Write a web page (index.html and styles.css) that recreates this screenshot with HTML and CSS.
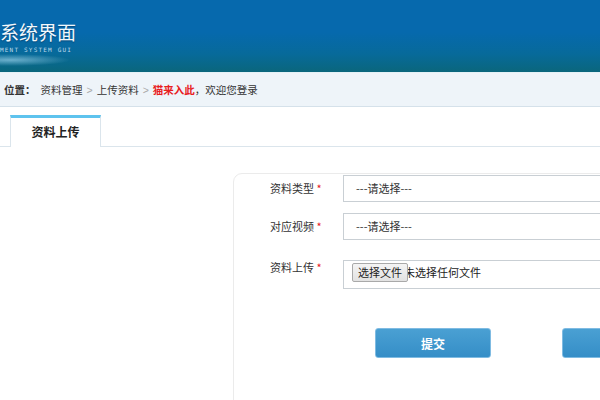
FILE: index.html
```html
<!DOCTYPE html>
<html lang="zh">
<head>
<meta charset="utf-8">
<link rel="stylesheet" href="styles.css">
</head>
<body>
<header class="header">
  <div class="logo">
    <div class="logo-title">系统界面</div>
    <div class="logo-sub">MENT SYSTEM GUI</div>
  </div>
</header>
<nav class="crumbs">
  <span class="crumbs-label">位置：</span>
  <span class="crumb">资料管理</span>
  <span class="sep">&gt;</span>
  <span class="crumb">上传资料</span>
  <span class="sep">&gt;</span>
  <span class="crumb-red">猫来入此</span><span class="crumb">，欢迎您登录</span>
</nav>
<div class="tabbar">
  <div class="tab">资料上传</div>
</div>
<main class="content">
  <section class="card">
    <div class="form">
      <div class="row">
        <div class="label">资料类型 <span class="req">*</span></div>
        <div class="field">---请选择---</div>
      </div>
      <div class="row row-gap-s">
        <div class="label">对应视频 <span class="req">*</span></div>
        <div class="field">---请选择---</div>
      </div>
      <div class="row row-gap-l">
        <div class="label label-top">资料上传 <span class="req">*</span></div>
        <div class="field field-file"><span class="file-btn">选择文件</span><span class="file-text">未选择任何文件</span></div>
      </div>
      <div class="actions">
        <button class="btn" type="button">提交</button>
        <button class="btn" type="button" aria-label="重置"></button>
      </div>
    </div>
  </section>
</main>
</body>
</html>
```
FILE: styles.css
```css
* { box-sizing: border-box; }
html, body { margin: 0; padding: 0; }
body {
  width: 600px;
  height: 400px;
  overflow: hidden;
  background: #fff;
  font-family: "Liberation Sans", "Noto Sans CJK SC", sans-serif;
  font-size: 12px;
  color: #333;
}
.header {
  height: 73px;
  border-bottom: 1px solid #e4f1f6;
  background:
    radial-gradient(ellipse 60px 6px at 10px 60px, rgba(190,235,255,0.55), rgba(190,235,255,0) 100%),
    linear-gradient(to bottom, #0669ad 0%, #0669ad 45%, #076a9a 75%, #0a667c 100%);
}
.logo { padding-top: 20px; width: 120px; }
.logo-title {
  color: #f2f8fc;
  font-family: "Noto Sans CJK SC", sans-serif;
  font-size: 19px;
  line-height: 24px;
  text-shadow: 0 1px 1px rgba(0,40,80,0.5);
}
.logo-sub {
  margin-top: 2px;
  color: #bcd8ea;
  font-family: "DejaVu Sans Mono", monospace;
  font-size: 6px;
  line-height: 8px;
  letter-spacing: 1.2px;
}
.crumbs {
  height: 34px;
  background: #eef4f9;
  border-bottom: 1px solid #d5e1ea;
  display: flex;
  align-items: center;
  padding-left: 4px;
  font-family: "Noto Sans CJK SC", sans-serif;
  font-size: 10.5px;
  color: #333;
}
.crumbs-label { font-weight: 700; margin-right: 5px; }
.sep { color: #aaa; margin: 0 4px; font-family: "Liberation Sans", sans-serif; }
.crumb-red { color: #e8201e; font-weight: 700; }
.tabbar {
  margin-top: 8px;
  padding-left: 10px;
  border-bottom: 1px solid #dbe5ec;
  height: 32px;
  display: flex;
}
.tab {
  width: 91px;
  height: 32px;
  background: #fff;
  border-top: 3px solid #5ec3ee;
  border-left: 1px solid #dbe5ec;
  border-right: 1px solid #dbe5ec;
  text-align: center;
  line-height: 28px;
  font-family: "Noto Sans CJK SC", sans-serif;
  font-size: 12px;
  font-weight: 700;
  color: #222;
}
.content {
  padding: 26px 0 0 233px;
}
.card {
  width: 420px;
  height: 300px;
  border: 1px solid #ebebeb;
  border-radius: 9px;
  padding: 1px 0 0 36px;
}
.form {
  display: flex;
  flex-direction: column;
}
.row {
  display: flex;
  align-items: flex-start;
}
.row-gap-s { margin-top: 11px; }
.row-gap-l { margin-top: 20px; }
.label {
  width: 73px;
  padding-top: 6px;
  line-height: 14px;
  font-family: "Noto Sans CJK SC", sans-serif;
  font-size: 11px;
  color: #333;
}
.label-top { padding-top: 0; }
.req { color: #e8201e; }
.field {
  flex: 1;
  height: 27px;
  border: 1px solid #c9cfd4;
  border-right: none;
  background: #fff;
  padding-left: 12px;
  line-height: 25px;
  font-family: "Noto Sans CJK SC", sans-serif;
  font-size: 11px;
  color: #333;
}
.field-file {
  height: 29px;
  padding-left: 8px;
  padding-top: 2px;
  line-height: 19px;
  display: flex;
  align-items: flex-start;
}
.file-btn {
  height: 19px;
  padding: 0 5px;
  border: 1px solid #a9a9a9;
  border-radius: 2px;
  background: linear-gradient(#f4f4f4, #e2e2e2);
  line-height: 17px;
  color: #222;
  position: relative;
  z-index: 1;
}
.file-text { margin-left: -4px; color: #222; }
.actions {
  display: flex;
  gap: 71px;
  margin-top: 39px;
  padding-left: 105px;
}
.btn {
  width: 116px;
  height: 30px;
  flex: none;
  border: 1px solid #7fbbe2;
  border-radius: 3px;
  background: linear-gradient(#4aa0d3, #358ec7);
  color: #fff;
  font-family: "Noto Sans CJK SC", sans-serif;
  font-size: 12px;
  font-weight: 700;
  padding: 0;
}
```
